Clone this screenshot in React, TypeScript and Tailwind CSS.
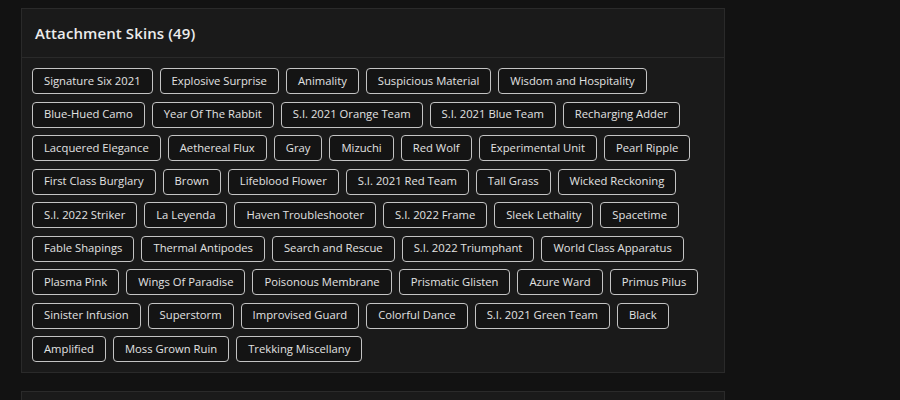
const rows: string[][] = [
  ["Signature Six 2021", "Explosive Surprise", "Animality", "Suspicious Material", "Wisdom and Hospitality"],
  ["Blue-Hued Camo", "Year Of The Rabbit", "S.I. 2021 Orange Team", "S.I. 2021 Blue Team", "Recharging Adder"],
  ["Lacquered Elegance", "Aethereal Flux", "Gray", "Mizuchi", "Red Wolf", "Experimental Unit", "Pearl Ripple"],
  ["First Class Burglary", "Brown", "Lifeblood Flower", "S.I. 2021 Red Team", "Tall Grass", "Wicked Reckoning"],
  ["S.I. 2022 Striker", "La Leyenda", "Haven Troubleshooter", "S.I. 2022 Frame", "Sleek Lethality", "Spacetime"],
  ["Fable Shapings", "Thermal Antipodes", "Search and Rescue", "S.I. 2022 Triumphant", "World Class Apparatus"],
  ["Plasma Pink", "Wings Of Paradise", "Poisonous Membrane", "Prismatic Glisten", "Azure Ward", "Primus Pilus"],
  ["Sinister Infusion", "Superstorm", "Improvised Guard", "Colorful Dance", "S.I. 2021 Green Team", "Black"],
  ["Amplified", "Moss Grown Ruin", "Trekking Miscellany"],
];

export default function App() {
  return (
    <div className="w-[900px] h-[400px] overflow-hidden bg-[#121212] pl-[21px] pt-[8px] font-['Open_Sans',sans-serif]">
      <section className="w-[704px] border border-[#2a2a2a] bg-[#1a1a1a]">
        <header className="h-[49px] border-b border-[#2a2a2a] flex items-center px-[13px]">
          <h2 className="text-[15px] font-semibold text-[#ececec] tracking-[0.1px]">Attachment Skins (49)</h2>
        </header>
        <div className="px-[10px] pt-[10px] pb-[10px] flex flex-col gap-y-[7.5px]">
          {rows.map((row, i) => (
            <div key={i} className="flex gap-x-[7px]">
              {row.map((name) => (
                <span
                  key={name}
                  className="h-[26px] px-[11px] flex items-center rounded-[4px] border border-[#c4c4c4] bg-[#141414] text-[11.25px] text-[#e2e2e2] whitespace-nowrap"
                >
                  {name}
                </span>
              ))}
            </div>
          ))}
        </div>
      </section>
      <section className="mt-[18px] w-[704px] h-[40px] border border-[#2a2a2a] bg-[#1a1a1a]" />
    </div>
  );
}
